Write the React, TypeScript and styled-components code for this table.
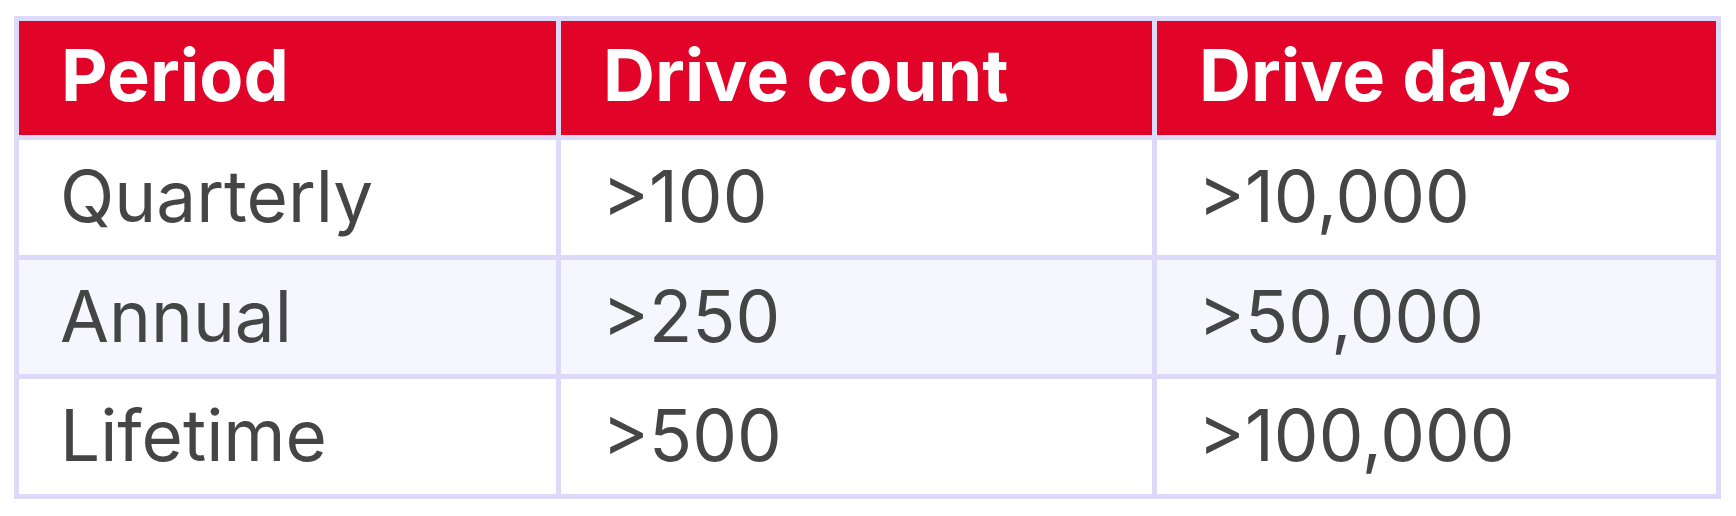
import React from "react";
import styled, { createGlobalStyle } from "styled-components";

const Global = createGlobalStyle`
  html, body { margin: 0; padding: 0; background: #ffffff; }
  body { font-family: Inter, "Noto Sans", "Liberation Sans", sans-serif; }
`;

const Page = styled.div`
  padding: 16px 0 0 14px;
`;

const Table = styled.div`
  display: grid;
  grid-template-columns: 537px 591px 559px;
  grid-template-rows: 114px 115px 114px 115px;
  gap: 5px;
  padding: 5px;
  width: max-content;
  background: #dcdaf8;
`;

const HeadCell = styled.div`
  display: flex;
  align-items: center;
  padding: 0 0 6px 42px;
  background: #e10428;
  color: #ffffff;
  font-weight: 700;
  font-size: 72px;
  line-height: 1;
`;

const Cell = styled.div<{ $alt?: boolean }>`
  display: flex;
  align-items: center;
  padding: 0 0 2px 41px;
  background: ${(p) => (p.$alt ? "#f6f6fe" : "#ffffff")};
  color: #454545;
  font-weight: 400;
  font-size: 71px;
  line-height: 1;
`;

const rows = [
  ["Quarterly", ">100", ">10,000"],
  ["Annual", ">250", ">50,000"],
  ["Lifetime", ">500", ">100,000"],
];

export default function App() {
  return (
    <>
      <Global />
      <Page>
        <Table>
          <HeadCell>Period</HeadCell>
          <HeadCell>Drive count</HeadCell>
          <HeadCell>Drive days</HeadCell>
          {rows.map((r, i) =>
            r.map((c, j) => (
              <Cell key={`${i}-${j}`} $alt={i % 2 === 1}>
                {c}
              </Cell>
            ))
          )}
        </Table>
      </Page>
    </>
  );
}
